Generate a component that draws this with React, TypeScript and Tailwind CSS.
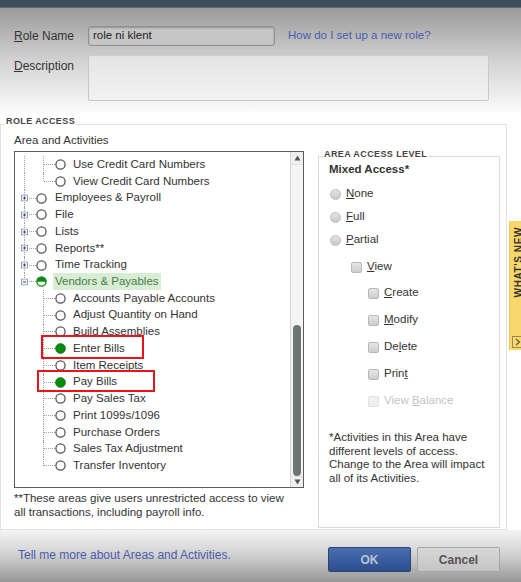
import React from "react"

type Row = {
  label: string
  kind: "top" | "child"
  state?: "empty" | "full" | "half"
  outer?: boolean
  last?: boolean
  expanded?: boolean
  highlight?: boolean
}

const rows: Row[] = [
  { label: "Use Credit Card Numbers", kind: "child", outer: true },
  { label: "View Credit Card Numbers", kind: "child", outer: true, last: true },
  { label: "Employees & Payroll", kind: "top" },
  { label: "File", kind: "top" },
  { label: "Lists", kind: "top" },
  { label: "Reports**", kind: "top" },
  { label: "Time Tracking", kind: "top" },
  { label: "Vendors & Payables", kind: "top", state: "half", expanded: true, last: true, highlight: true },
  { label: "Accounts Payable Accounts", kind: "child" },
  { label: "Adjust Quantity on Hand", kind: "child" },
  { label: "Build Assemblies", kind: "child" },
  { label: "Enter Bills", kind: "child", state: "full" },
  { label: "Item Receipts", kind: "child" },
  { label: "Pay Bills", kind: "child", state: "full" },
  { label: "Pay Sales Tax", kind: "child" },
  { label: "Print 1099s/1096", kind: "child" },
  { label: "Purchase Orders", kind: "child" },
  { label: "Sales Tax Adjustment", kind: "child" },
  { label: "Transfer Inventory", kind: "child", last: true },
]

function Circle({ state = "empty" }: { state?: "empty" | "full" | "half" }) {
  if (state === "full") {
    return (
      <svg width="11" height="11" viewBox="0 0 12 12" className="shrink-0">
        <circle cx="6" cy="6" r="5.3" fill="#0b8a12" stroke="#0a7510" strokeWidth="1" />
      </svg>
    )
  }
  if (state === "half") {
    return (
      <svg width="11" height="11" viewBox="0 0 12 12" className="shrink-0">
        <circle cx="6" cy="6" r="5" fill="#fff" stroke="#0b8a12" strokeWidth="1.5" />
        <path d="M0.8 6.2 A5.2 5.2 0 0 1 11.2 6.2 Z" fill="#0b8a12" />
      </svg>
    )
  }
  return (
    <svg width="11" height="11" viewBox="0 0 12 12" className="shrink-0">
      <circle cx="6" cy="6" r="5" fill="#fff" stroke="#555" strokeWidth="1.4" />
    </svg>
  )
}

function PlusBox({ expanded }: { expanded?: boolean }) {
  return (
    <svg width="7" height="7" viewBox="0 0 7 7" className="absolute left-[6px] top-1/2 -translate-y-1/2">
      <rect x="0.5" y="0.5" width="6" height="6" fill="#f4f6fa" stroke="#8e9bb0" />
      <line x1="2" y1="3.5" x2="5" y2="3.5" stroke="#3a4a6a" />
      {!expanded && <line x1="3.5" y1="2" x2="3.5" y2="5" stroke="#3a4a6a" />}
    </svg>
  )
}

function TreeRow({ row }: { row: Row }) {
  if (row.kind === "top") {
    return (
      <div className="flex items-center h-[16.72px]">
        <div className="relative w-[14px] self-stretch">
          <div
            className={`absolute left-[9px] top-0 border-l border-dotted border-[#a0a0a0] ${row.last ? "h-1/2" : "h-full"}`}
          />
          <PlusBox expanded={row.expanded} />
        </div>
        <div className="w-[7px] border-t border-dotted border-[#a0a0a0]" />
        <Circle state={row.state} />
        {row.highlight ? (
          <span className="ml-[6px] px-[2px] self-stretch flex items-center bg-[#d8eed4] text-[#4c7a4c]">
            {row.label}
          </span>
        ) : (
          <span className="ml-[8px]">{row.label}</span>
        )}
      </div>
    )
  }
  return (
    <div className="flex items-center h-[16.72px]">
      <div className="relative w-[29px] self-stretch">
        {row.outer && <div className="absolute left-[9px] top-0 h-full border-l border-dotted border-[#a0a0a0]" />}
        <div
          className={`absolute left-[28px] top-0 border-l border-dotted border-[#a0a0a0] ${row.last ? "h-1/2" : "h-full"}`}
        />
      </div>
      <div className="w-[11px] border-t border-dotted border-[#a0a0a0]" />
      <Circle state={row.state} />
      <span className="ml-[7px]">{row.label}</span>
    </div>
  )
}

function Radio({ label }: { label: React.ReactNode }) {
  return (
    <div className="flex items-center h-[13px]">
      <div className="w-[11px] h-[11px] ml-[1px] rounded-full border border-[#bcbcbc] bg-gradient-to-b from-[#e4e4e4] to-[#c9c9c9]" />
      <span className="ml-[5px]">{label}</span>
    </div>
  )
}

function Check({ label, disabled }: { label: React.ReactNode; disabled?: boolean }) {
  return (
    <div className={`flex items-center h-[13px] ${disabled ? "text-[#c4c4c4]" : ""}`}>
      <div
        className={`w-[11px] h-[11px] rounded-[2px] border ${
          disabled
            ? "border-[#e0e0e0] bg-[#f0f0f0]"
            : "border-[#b8b8b8] bg-gradient-to-b from-[#e6e6e6] to-[#cdcdcd]"
        }`}
      />
      <span className="ml-[5px]">{label}</span>
    </div>
  )
}

export default function App() {
  return (
    <div className="relative w-[521px] h-[582px] overflow-hidden flex flex-col bg-white text-[#333] font-['Liberation_Sans',Arial,sans-serif] text-[11.5px] leading-none">
      {/* title bar */}
      <div className="h-[8px] shrink-0 bg-[#3f4d59] border-b border-[#5b6772]" />

      {/* role name / description */}
      <div className="h-[105px] shrink-0 bg-gradient-to-b from-[#9b9b9b] via-[#d2d2d2] to-[#fcfcfc] pt-[18px] pl-[14px]">
        <div className="flex items-center h-[20px]">
          <span className="w-[74px] text-[12px]">
            <span className="underline">R</span>ole Name
          </span>
          <div className="w-[187px] h-[20px] rounded-[3px] border border-[#8f8f8f] bg-[#c6c6c6] shadow-[inset_0_1px_2px_rgba(0,0,0,0.25)] flex items-center pl-[4px] text-[#222]">
            role ni klent
          </div>
          <span className="ml-[13px] text-[#4b5cae]">How do I set up a new role?</span>
        </div>
        <div className="flex mt-[8px]">
          <span className="w-[74px] pt-[6px] text-[12px]">
            <span className="underline">D</span>escription
          </span>
          <div className="w-[401px] h-[47px] rounded-[2px] border border-[#c8c8c8] bg-gradient-to-b from-[#e4e4e4] to-[#f2f2f2] shadow-[inset_0_1px_1px_rgba(0,0,0,0.1)]" />
        </div>
      </div>

      {/* role access */}
      <fieldset className="mt-[4px] w-[507px] h-[413px] shrink-0 border border-[#e2e2e2] p-0">
        <legend className="ml-[4px] px-[1px] pb-[5px] text-[9px] leading-[9px] font-bold tracking-[0.4px] text-[#444]">
          ROLE ACCESS
        </legend>
        <div className="flex pl-[13px] pt-[3.5px]">
          <div className="w-[290px] flex flex-col">
            <div>Area and Activities</div>
            <div className="relative mt-[5px] h-[337px] border border-[#5c5c5c] flex bg-white">
              <div className="flex-1 pt-[4.4px] text-[#333]">
                {rows.map((r) => (
                  <TreeRow key={r.label} row={r} />
                ))}
              </div>
              <div className="w-[13px] flex flex-col bg-[#f0f0f0] border-l border-[#d4d4d4]">
                <div className="h-[12px] flex items-center justify-center">
                  <svg width="7" height="6" viewBox="0 0 7 6">
                    <path d="M3.5 0.5 L6.5 5.5 L0.5 5.5 Z" fill="#555" />
                  </svg>
                </div>
                <div className="flex-1 flex flex-col justify-end items-center border-y border-[#e2e2e2] bg-[#f4f4f4]">
                  <div className="w-[8px] h-[151px] rounded-full bg-[#6f7573]" />
                </div>
                <div className="h-[10px] flex items-center justify-center">
                  <svg width="7" height="6" viewBox="0 0 7 6">
                    <path d="M0.5 0.5 L6.5 0.5 L3.5 5.5 Z" fill="#555" />
                  </svg>
                </div>
              </div>
              {/* annotation boxes */}
              <div className="absolute left-[26px] top-[183px] w-[103px] h-[24px] border-2 border-[#e8141c]" />
              <div className="absolute left-[22px] top-[218px] w-[118px] h-[22px] border-2 border-[#e8141c]" />
            </div>
            <div className="mt-[3px] leading-[14px]">
              **These areas give users unrestricted access to view
              <br />
              all transactions, including payroll info.
            </div>
          </div>

          <fieldset className="ml-[14px] mt-[15px] w-[182px] h-[378px] border border-[#dcdcdc] p-0">
            <legend className="ml-[4px] px-[1px] pb-[5px] text-[9px] leading-[9px] font-bold tracking-[0.4px] text-[#444]">
              AREA ACCESS LEVEL
            </legend>
            <div className="pl-[10px] pt-[0.5px] flex flex-col">
              <div className="font-bold">Mixed Access*</div>
              <div className="mt-[12px] flex flex-col gap-[10px]">
                <Radio label={<><span className="underline">N</span>one</>} />
                <Radio label={<><span className="underline">F</span>ull</>} />
                <Radio label={<><span className="underline">P</span>artial</>} />
              </div>
              <div className="mt-[14px] pl-[22px]">
                <Check label={<><span className="underline">V</span>iew</>} />
              </div>
              <div className="mt-[13px] pl-[39px] flex flex-col gap-[14px]">
                <Check label={<><span className="underline">C</span>reate</>} />
                <Check label={<><span className="underline">M</span>odify</>} />
                <Check label={<>De<span className="underline">l</span>ete</>} />
                <Check label={<>Prin<span className="underline">t</span></>} />
                <Check disabled label={<>View <span className="underline">B</span>alance</>} />
              </div>
              <div className="mt-[23.5px] leading-[13.7px]">
                *Activities in this Area have
                <br />
                different levels of access.
                <br />
                Change to the Area will impact
                <br />
                all of its Activities.
              </div>
            </div>
          </fieldset>
        </div>
      </fieldset>

      {/* bottom bar */}
      <div className="flex-1 flex items-start pt-[17px] pl-[18px] pr-[21px] bg-gradient-to-b from-[#f4f4f4] via-[#cfcfcf] to-[#979797]">
        <span className="mt-[1.5px] text-[12px] text-[#4b5cae]">Tell me more about Areas and Activities.</span>
        <div className="ml-auto flex gap-[6px]">
          <button className="w-[83px] h-[25px] rounded-[2px] border border-[#2b4577] bg-gradient-to-b from-[#4a6fb0] to-[#2d4d8c] text-[12px] font-bold text-[#b9c5da]">
            OK
          </button>
          <button className="w-[83px] h-[25px] rounded-[2px] border border-[#a8a8a8] bg-gradient-to-b from-[#d8d8d8] to-[#c4c4c4] text-[12px] font-bold text-[#555]">
            Cancel
          </button>
        </div>
      </div>

      {/* what's new tab */}
      <div className="absolute left-[509px] top-[221px] w-[22px] h-[129px] bg-[#f8d86b] border-l border-[#e9c552] flex flex-col pl-[4px] pt-[6px] pb-[2px]">
        <span className="[writing-mode:vertical-rl] rotate-180 font-bold text-[10px] tracking-[0.6px] text-[#333]">
          WHAT'S NEW
        </span>
        <div className="mt-auto -ml-[2px] w-[12px] h-[12px] border border-[#9c8a4c] flex items-center justify-center">
          <svg width="6" height="8" viewBox="0 0 6 8">
            <path d="M1 1 L4.5 4 L1 7" fill="none" stroke="#555" strokeWidth="1.2" />
          </svg>
        </div>
      </div>
    </div>
  )
}
